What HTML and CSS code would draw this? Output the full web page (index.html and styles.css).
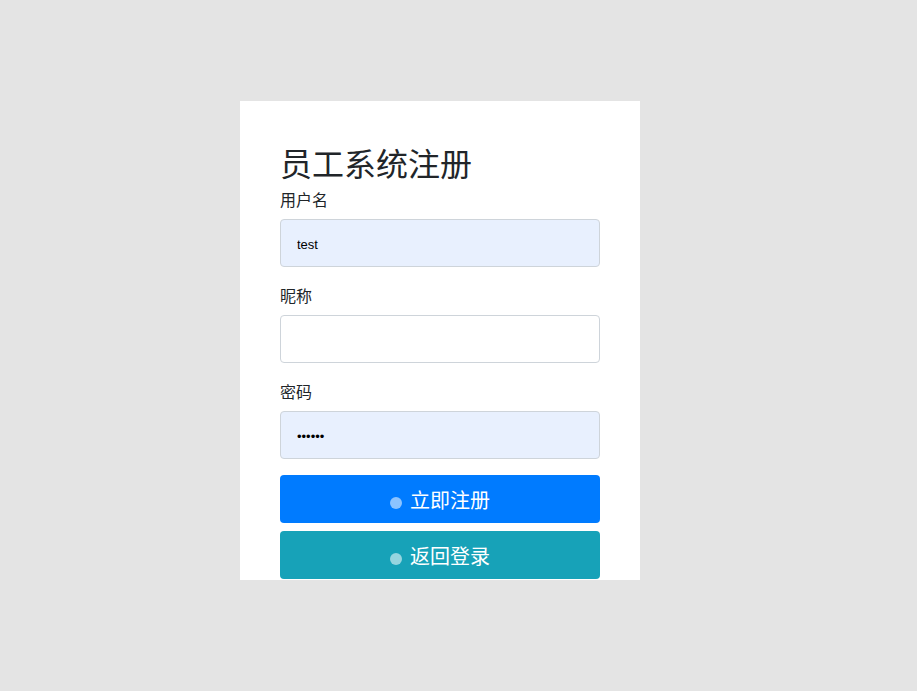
FILE: index.html
```html
<!DOCTYPE html>
<html lang="zh">
<head>
<meta charset="utf-8">
<title>员工系统注册</title>
<link rel="stylesheet" href="styles.css">
</head>
<body>
<div class="card">
  <h2 class="title">员工系统注册</h2>
  <div class="group">
    <label class="label">用户名</label>
    <input class="field filled" type="text" value="test">
  </div>
  <div class="group">
    <label class="label">昵称</label>
    <input class="field" type="text" value="">
  </div>
  <div class="group">
    <label class="label">密码</label>
    <input class="field filled" type="password" value="123456">
  </div>
  <button class="btn btn-primary"><span class="dot"></span>立即注册</button>
  <button class="btn btn-info"><span class="dot"></span>返回登录</button>
</div>
</body>
</html>
```
FILE: styles.css
```css
html, body {
  margin: 0;
  padding: 0;
}
body {
  background: #e4e4e4;
  font-family: "Microsoft YaHei", "Noto Sans CJK SC", "Liberation Sans", sans-serif;
  color: #212529;
  height: 691px;
}
.card {
  margin: 101px 0 0 240px;
  width: 400px;
  height: 479px;
  box-sizing: border-box;
  background: #fff;
  padding: 42px 40px 0;
  display: flex;
  flex-direction: column;
}
.title {
  margin: 0 0 6px;
  font-size: 32px;
  font-weight: 400;
  line-height: 38px;
  color: #212529;
}
.group {
  display: flex;
  flex-direction: column;
  margin-bottom: 16px;
}
.label {
  font-size: 16px;
  line-height: 24px;
  margin-bottom: 8px;
  color: #212529;
}
.field {
  height: 48px;
  box-sizing: border-box;
  border: 1px solid #ced4da;
  border-radius: 4px;
  padding: 3px 16px 0;
  font-family: "Liberation Sans", Arial, sans-serif;
  font-size: 13px;
  color: #000;
  background: #fff;
  outline: none;
}
.field.filled {
  background: #e8f0fe;
}
.btn {
  height: 48px;
  border: none;
  border-radius: 4px;
  color: #fff;
  font-family: "Microsoft YaHei", "Noto Sans CJK SC", sans-serif;
  font-size: 20px;
  display: flex;
  align-items: center;
  justify-content: center;
  gap: 8px;
  padding: 0;
  margin: 0;
}
.btn-primary {
  background: #007bff;
}
.btn-info {
  background: #17a2b8;
  margin-top: 8px;
}
.dot {
  width: 12px;
  height: 12px;
  border-radius: 50%;
  background: rgba(255, 255, 255, 0.55);
  margin-top: 8px;
}
```
